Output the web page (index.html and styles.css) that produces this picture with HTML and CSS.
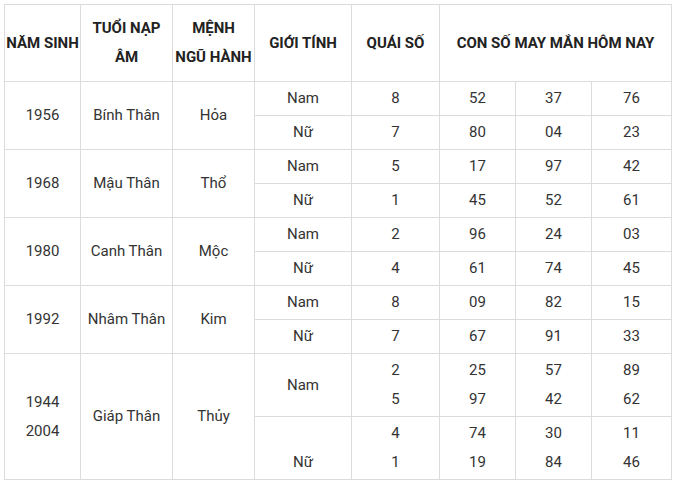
FILE: index.html
```html
<!DOCTYPE html>
<html lang="vi">
<head>
<meta charset="utf-8">
<link rel="stylesheet" href="styles.css">
</head>
<body>
<table class="lucky">
  <colgroup>
    <col class="c1"><col class="c2"><col class="c3"><col class="c4"><col class="c5"><col class="c6"><col class="c7"><col class="c8">
  </colgroup>
  <thead>
    <tr>
      <th>NĂM SINH</th>
      <th>TUỔI NẠP ÂM</th>
      <th>MỆNH<br>NGŨ HÀNH</th>
      <th>GIỚI TÍNH</th>
      <th>QUÁI SỐ</th>
      <th colspan="3">CON SỐ MAY MẮN HÔM NAY</th>
    </tr>
  </thead>
  <tbody>
    <tr><td rowspan="2">1956</td><td rowspan="2">Bính Thân</td><td rowspan="2">Hỏa</td><td>Nam</td><td>8</td><td>52</td><td>37</td><td>76</td></tr>
    <tr><td>Nữ</td><td>7</td><td>80</td><td>04</td><td>23</td></tr>
    <tr><td rowspan="2">1968</td><td rowspan="2">Mậu Thân</td><td rowspan="2">Thổ</td><td>Nam</td><td>5</td><td>17</td><td>97</td><td>42</td></tr>
    <tr><td>Nữ</td><td>1</td><td>45</td><td>52</td><td>61</td></tr>
    <tr><td rowspan="2">1980</td><td rowspan="2">Canh Thân</td><td rowspan="2">Mộc</td><td>Nam</td><td>2</td><td>96</td><td>24</td><td>03</td></tr>
    <tr><td>Nữ</td><td>4</td><td>61</td><td>74</td><td>45</td></tr>
    <tr><td rowspan="2">1992</td><td rowspan="2">Nhâm Thân</td><td rowspan="2">Kim</td><td>Nam</td><td>8</td><td>09</td><td>82</td><td>15</td></tr>
    <tr><td>Nữ</td><td>7</td><td>67</td><td>91</td><td>33</td></tr>
    <tr><td rowspan="2">1944<br>2004</td><td rowspan="2">Giáp Thân</td><td rowspan="2">Thủy</td><td>Nam</td><td>2<br>5</td><td>25<br>97</td><td>57<br>42</td><td>89<br>62</td></tr>
    <tr><td class="bottom">Nữ</td><td>4<br>1</td><td>74<br>19</td><td>30<br>84</td><td>11<br>46</td></tr>
  </tbody>
</table>
</body>
</html>
```

FILE: styles.css
```css
html, body {
  margin: 0;
  padding: 0;
  background: #fff;
}
body {
  padding: 4px 0 0 4px;
  font-family: Roboto, "Liberation Sans", Arial, sans-serif;
  font-size: 15px;
  color: #333;
}
.lucky {
  border-collapse: collapse;
  table-layout: fixed;
  width: 668px;
}
.c1 { width: 76px; }
.c2 { width: 92px; }
.c3 { width: 82px; }
.c4 { width: 97px; }
.c5 { width: 88px; }
.c6 { width: 76px; }
.c7 { width: 76px; }
.c8 { width: 80px; }
.lucky th,
.lucky td {
  border: 1px solid #dcdcdc;
  text-align: center;
  vertical-align: middle;
  line-height: 29px;
  padding: 2px 1px;
}
.lucky th {
  font-weight: 700;
  color: #222;
  height: 58px;
  padding: 9px 1px;
}
.lucky td.bottom {
  vertical-align: bottom;
}
```
